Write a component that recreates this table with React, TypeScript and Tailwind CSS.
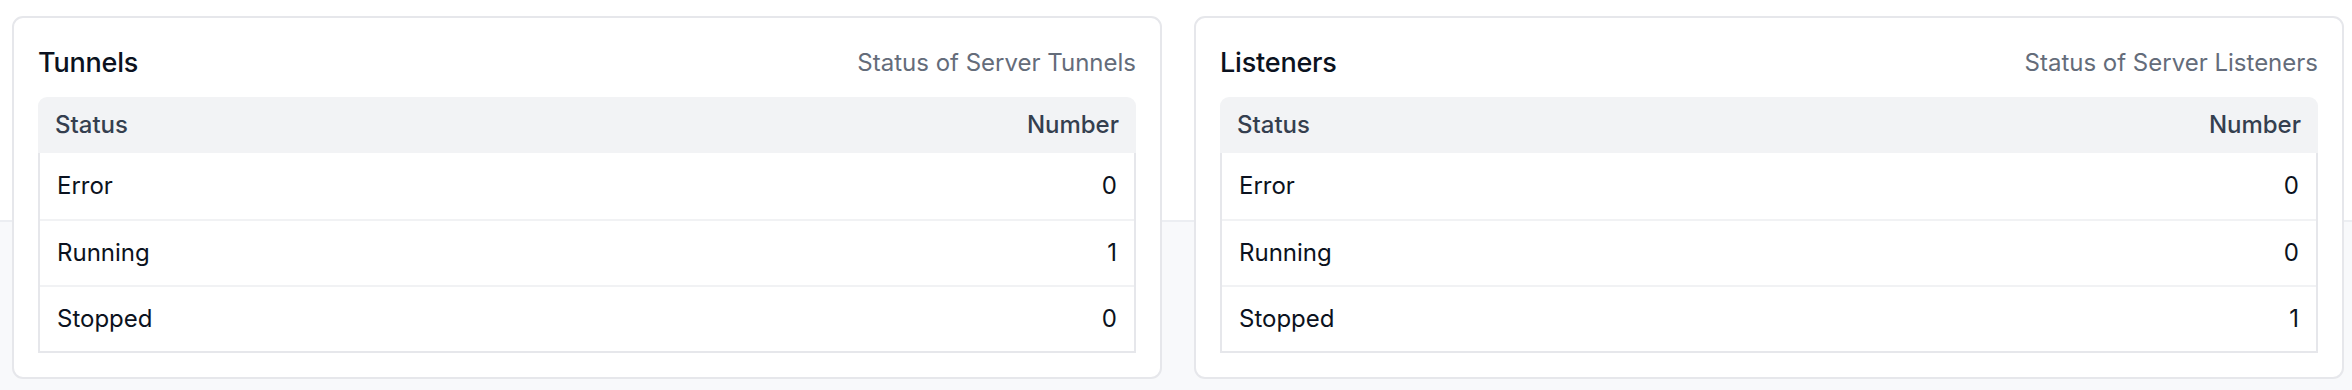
const tunnels = [
  { status: "Error", count: 0 },
  { status: "Running", count: 1 },
  { status: "Stopped", count: 0 },
];

const listeners = [
  { status: "Error", count: 0 },
  { status: "Running", count: 0 },
  { status: "Stopped", count: 1 },
];

type Row = { status: string; count: number };

function StatusCard({ title, subtitle, rows }: { title: string; subtitle: string; rows: Row[] }) {
  return (
    <div className="flex-1 bg-white border-2 border-[#e6e7eb] rounded-[11px] p-6">
      {/* Header */}
      <div className="flex justify-between items-center h-[42px] mb-[13px]">
        <span className="text-[27px] font-medium text-[#0b1220] tracking-[-0.2px]">{title}</span>
        <span className="text-[24px] text-[#646c7a]">{subtitle}</span>
      </div>

      {/* Table */}
      <div className="flex flex-col">
        <div className="flex justify-between items-center h-[56px] px-[17px] bg-[#f2f3f5] rounded-t-[9px] text-[24px] font-medium text-[#353f4f]">
          <span>Status</span>
          <span>Number</span>
        </div>
        <div className="border-x-2 border-b-2 border-[#e6e7eb]">
          {rows.map((row, idx) => (
            <div
              key={row.status}
              className={
                "flex justify-between items-center h-[66px] px-[17px] text-[24px] text-[#0b1220]" +
                (idx > 0 ? " border-t-2 border-[#f1f2f4]" : "")
              }
            >
              <span>{row.status}</span>
              <span>{row.count}</span>
            </div>
          ))}
        </div>
      </div>
    </div>
  );
}

export default function App() {
  return (
    <div
      className="min-h-[390px] w-full pl-[12px] pr-[8px] pt-[16px] pb-[11px] bg-[linear-gradient(to_bottom,#ffffff_220px,#eceef2_220px,#eceef2_222px,#f8f9fb_222px)]"
      style={{ fontFamily: "Inter, 'Noto Sans', sans-serif" }}
    >
      <div className="flex gap-[32px]">
        <StatusCard title="Tunnels" subtitle="Status of Server Tunnels" rows={tunnels} />
        <StatusCard title="Listeners" subtitle="Status of Server Listeners" rows={listeners} />
      </div>
    </div>
  );
}
